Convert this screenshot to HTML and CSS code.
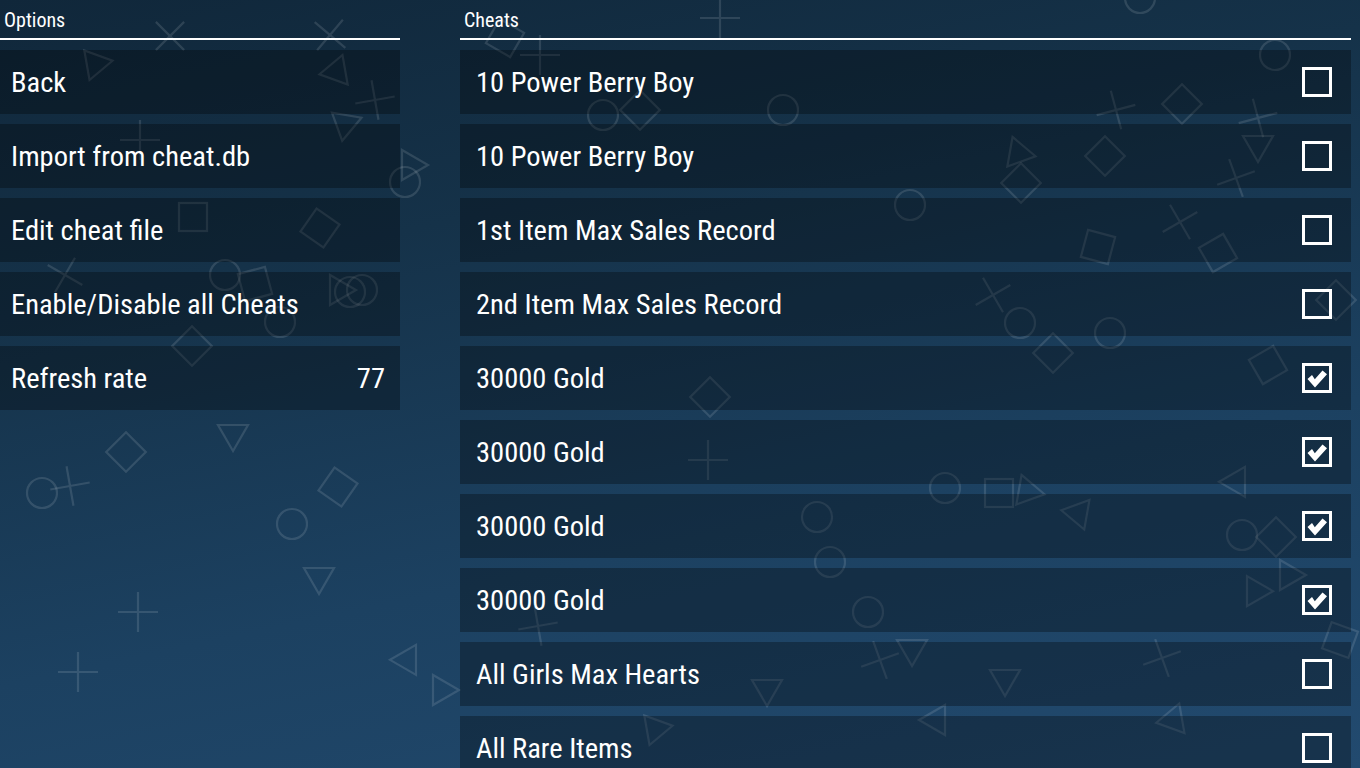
FILE: index.html
```html
<!DOCTYPE html>
<html lang="en">
<head>
<meta charset="utf-8">
<title>Cheats</title>
<link rel="stylesheet" href="styles.css">
</head>
<body>
<svg class="bg" width="1360" height="768" viewBox="0 0 1360 768" aria-hidden="true">
  <defs>
    <path id="cr" d="M-20 0H20M0 -20V20"/>
    <circle id="ci" r="15"/>
    <rect id="sq" x="-14" y="-14" width="28" height="28"/>
    <polygon id="tr" points="0,-16 15,10 -15,10"/>
  </defs>
  <g class="shapes">
    <use href="#cr" transform="translate(170 36) rotate(45)"/>
    <use href="#tr" transform="translate(95 65) rotate(200)"/>
    <use href="#cr" transform="translate(330 35) rotate(40)"/>
    <use href="#tr" transform="translate(337 70) rotate(20)"/>
    <use href="#cr" transform="translate(375 100) rotate(-10)"/>
    <use href="#tr" transform="translate(345 125) rotate(190)"/>
    <use href="#tr" transform="translate(412 165) rotate(90)"/>
    <use href="#ci" transform="translate(405 182)"/>
    <use href="#cr" transform="translate(140 140)"/>
    <use href="#sq" transform="translate(193 217)"/>
    <use href="#sq" transform="translate(320 228) rotate(35)"/>
    <use href="#cr" transform="translate(65 275) rotate(30)"/>
    <use href="#ci" transform="translate(225 275)"/>
    <use href="#sq" transform="translate(255 284) rotate(-15)"/>
    <use href="#ci" transform="translate(350 292)"/>
    <use href="#ci" transform="translate(362 290)"/>
    <use href="#tr" transform="translate(340 290) rotate(90)"/>
    <use href="#ci" transform="translate(280 322)"/>
    <use href="#sq" transform="translate(192 346) rotate(45)"/>
    <use href="#tr" transform="translate(233 435) rotate(180)"/>
    <use href="#sq" transform="translate(126 452) rotate(45)"/>
    <use href="#ci" transform="translate(42 493)"/>
    <use href="#cr" transform="translate(70 486) rotate(-10)"/>
    <use href="#sq" transform="translate(338 487) rotate(35)"/>
    <use href="#ci" transform="translate(292 524)"/>
    <use href="#tr" transform="translate(319 578) rotate(180)"/>
    <use href="#cr" transform="translate(138 612)"/>
    <use href="#cr" transform="translate(78 672)"/>
    <use href="#tr" transform="translate(408 661) rotate(150)"/>
    <use href="#tr" transform="translate(443 690) rotate(90)"/>
    <use href="#cr" transform="translate(720 18)"/>
    <use href="#ci" transform="translate(1140 -2)"/>
    <use href="#sq" transform="translate(505 38) rotate(30)"/>
    <use href="#cr" transform="translate(540 55)"/>
    <use href="#ci" transform="translate(1275 55)"/>
    <use href="#ci" transform="translate(603 115)"/>
    <use href="#sq" transform="translate(640 110) rotate(45)"/>
    <use href="#ci" transform="translate(783 110)"/>
    <use href="#cr" transform="translate(1116 110) rotate(-15)"/>
    <use href="#sq" transform="translate(1182 104) rotate(45)"/>
    <use href="#cr" transform="translate(1258 118) rotate(-15)"/>
    <use href="#tr" transform="translate(1258 146) rotate(180)"/>
    <use href="#cr" transform="translate(1236 178) rotate(-20)"/>
    <use href="#tr" transform="translate(1018 152) rotate(-20)"/>
    <use href="#sq" transform="translate(1021 183) rotate(45)"/>
    <use href="#sq" transform="translate(1105 156) rotate(45)"/>
    <use href="#ci" transform="translate(910 205)"/>
    <use href="#cr" transform="translate(1180 222) rotate(-30)"/>
    <use href="#sq" transform="translate(1098 247) rotate(15)"/>
    <use href="#sq" transform="translate(1218 253) rotate(-30)"/>
    <use href="#sq" transform="translate(1336 300) rotate(45)"/>
    <use href="#cr" transform="translate(993 295) rotate(-30)"/>
    <use href="#ci" transform="translate(1020 323)"/>
    <use href="#sq" transform="translate(1053 353) rotate(45)"/>
    <use href="#ci" transform="translate(1110 333)"/>
    <use href="#sq" transform="translate(1268 365) rotate(-30)"/>
    <use href="#sq" transform="translate(710 397) rotate(45)"/>
    <use href="#cr" transform="translate(708 460)"/>
    <use href="#ci" transform="translate(945 488)"/>
    <use href="#sq" transform="translate(999 493)"/>
    <use href="#tr" transform="translate(1027 490) rotate(-20)"/>
    <use href="#tr" transform="translate(1077 513) rotate(-80)"/>
    <use href="#tr" transform="translate(1237 483) rotate(150)"/>
    <use href="#ci" transform="translate(1242 535)"/>
    <use href="#sq" transform="translate(1276 537) rotate(45)"/>
    <use href="#ci" transform="translate(817 517)"/>
    <use href="#ci" transform="translate(830 562)"/>
    <use href="#ci" transform="translate(868 612)"/>
    <use href="#tr" transform="translate(912 650) rotate(180)"/>
    <use href="#cr" transform="translate(1162 658) rotate(-20)"/>
    <use href="#cr" transform="translate(538 626) rotate(-10)"/>
    <use href="#tr" transform="translate(767 690) rotate(180)"/>
    <use href="#tr" transform="translate(1172 720) rotate(-100)"/>
    <use href="#tr" transform="translate(1290 575) rotate(90)"/>
    <use href="#tr" transform="translate(1255 590) rotate(-30)"/>
    <use href="#sq" transform="translate(1340 640) rotate(20)"/>
    <use href="#tr" transform="translate(1005 680) rotate(180)"/>
    <use href="#cr" transform="translate(880 660) rotate(-20)"/>
    <use href="#tr" transform="translate(935 720) rotate(-90)"/>
    <use href="#tr" transform="translate(655 730) rotate(200)"/>
  </g>
</svg>

<main class="screen">
  <section class="col options">
    <h2 class="col-title">Options</h2>
    <ul class="list">
      <li class="item">Back</li>
      <li class="item">Import from cheat.db</li>
      <li class="item">Edit cheat file</li>
      <li class="item">Enable/Disable all Cheats</li>
      <li class="item"><span class="label">Refresh rate</span><span class="value">77</span></li>
    </ul>
  </section>
  <section class="col cheats">
    <h2 class="col-title">Cheats</h2>
    <ul class="list">
      <li class="item cheat"><span class="label">10 Power Berry Boy</span><span class="box"></span></li>
      <li class="item cheat"><span class="label">10 Power Berry Boy</span><span class="box"></span></li>
      <li class="item cheat"><span class="label">1st Item Max Sales Record</span><span class="box"></span></li>
      <li class="item cheat"><span class="label">2nd Item Max Sales Record</span><span class="box"></span></li>
      <li class="item cheat"><span class="label">30000 Gold</span><span class="box"><svg class="tick" viewBox="0 0 24 24"><path d="M2.5 13 L7 9 L9.8 13.3 L17.5 4.5 L22 8.2 L10 21.5 Z"/></svg></span></li>
      <li class="item cheat"><span class="label">30000 Gold</span><span class="box"><svg class="tick" viewBox="0 0 24 24"><path d="M2.5 13 L7 9 L9.8 13.3 L17.5 4.5 L22 8.2 L10 21.5 Z"/></svg></span></li>
      <li class="item cheat"><span class="label">30000 Gold</span><span class="box"><svg class="tick" viewBox="0 0 24 24"><path d="M2.5 13 L7 9 L9.8 13.3 L17.5 4.5 L22 8.2 L10 21.5 Z"/></svg></span></li>
      <li class="item cheat"><span class="label">30000 Gold</span><span class="box"><svg class="tick" viewBox="0 0 24 24"><path d="M2.5 13 L7 9 L9.8 13.3 L17.5 4.5 L22 8.2 L10 21.5 Z"/></svg></span></li>
      <li class="item cheat"><span class="label">All Girls Max Hearts</span><span class="box"></span></li>
      <li class="item cheat"><span class="label">All Rare Items</span><span class="box"></span></li>
    </ul>
  </section>
</main>
</body>
</html>
```
FILE: styles.css
```css
html, body {
  margin: 0;
  padding: 0;
}
body {
  width: 1360px;
  height: 768px;
  overflow: hidden;
  position: relative;
  color: #ffffff;
  font-family: "Roboto Condensed", "Liberation Sans Narrow", Roboto, sans-serif;
  font-stretch: condensed;
  background: linear-gradient(168deg, #10273a 0%, #153249 30%, #1c4161 65%, #224a6f 100%);
}
.bg {
  position: absolute;
  left: 0;
  top: 0;
  z-index: 0;
}
.shapes use {
  fill: none;
  stroke: rgba(255, 255, 255, 0.12);
  stroke-width: 2.2;
}
.screen {
  position: relative;
  z-index: 1;
  display: flex;
  gap: 60px;
  padding-right: 9px;
}
.col {
  display: flex;
  flex-direction: column;
}
.options {
  width: 400px;
  flex: none;
}
.cheats {
  flex: 1;
}
.col-title {
  margin: 0;
  box-sizing: border-box;
  height: 40px;
  padding: 10px 0 0 4px;
  font-size: 20px;
  line-height: 20px;
  font-weight: 400;
  border-bottom: 2px solid #ffffff;
}
.list {
  list-style: none;
  margin: 10px 0 0;
  padding: 0;
  display: flex;
  flex-direction: column;
  gap: 10px;
}
.item {
  height: 64px;
  display: flex;
  align-items: center;
  padding: 0 15px 0 11px;
  font-size: 28.5px;
  background: rgba(0, 0, 0, 0.3);
}
.item .label {
  flex: 1;
}
.item .value {
  flex: none;
}
.cheat {
  padding: 0 19px 0 16px;
}
.box {
  flex: none;
  box-sizing: border-box;
  width: 30px;
  height: 30px;
  border: 3px solid #ffffff;
  display: flex;
  align-items: center;
  justify-content: center;
}
.tick {
  width: 24px;
  height: 24px;
  fill: #ffffff;
}
```
